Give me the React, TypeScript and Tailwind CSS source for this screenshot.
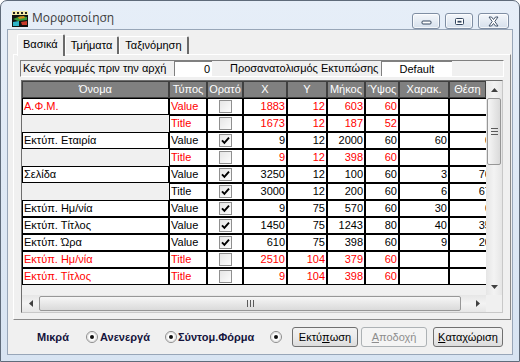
import React from 'react';

type Row = { name?: string; type: string; on: boolean; red: boolean; v: string[] };

const rows: Row[] = [
    { name: 'Α.Φ.Μ.', type: 'Value', on: false, red: true, v: ['1883', '12', '603', '60', '', ''] },
    { type: 'Title', on: false, red: true, v: ['1673', '12', '187', '52', '', ''] },
    { name: 'Εκτύπ. Εταιρία', type: 'Value', on: true, red: false, v: ['9', '12', '2000', '60', '60', '0'] },
    { type: 'Title', on: false, red: true, v: ['9', '12', '398', '60', '', ''] },
    { name: 'Σελίδα', type: 'Value', on: true, red: false, v: ['3250', '12', '100', '60', '3', '76'] },
    { type: 'Title', on: true, red: false, v: ['3000', '12', '200', '60', '6', '67'] },
    { name: 'Εκτύπ. Ημ/νία', type: 'Value', on: true, red: false, v: ['9', '75', '570', '60', '30', '0'] },
    { name: 'Εκτύπ. Τίτλος', type: 'Value', on: true, red: false, v: ['1450', '75', '1243', '80', '40', '35'] },
    { name: 'Εκτύπ. Ώρα', type: 'Value', on: true, red: false, v: ['610', '75', '398', '60', '9', '20'] },
    { name: 'Εκτύπ. Ημ/νία', type: 'Title', on: false, red: true, v: ['2510', '104', '379', '60', '', ''] },
    { name: 'Εκτύπ. Τίτλος', type: 'Title', on: false, red: true, v: ['9', '104', '398', '60', '', ''] },
];

const heads = [
    { t: 'Όνομα', w: 'w-[147px]' },
    { t: 'Τύπος', w: 'w-[38px]' },
    { t: 'Ορατό', w: 'w-[36px]' },
    { t: 'X', w: 'w-[44px]' },
    { t: 'Y', w: 'w-[40px]' },
    { t: 'Μήκος', w: 'w-[38px]' },
    { t: 'Ύψος', w: 'w-[34px]' },
    { t: 'Χαρακ.', w: 'w-[50px]' },
    { t: 'Θέση', w: 'w-[37px]' },
];

const numW = ['w-[44px]', 'w-[40px]', 'w-[38px]', 'w-[34px]', 'w-[50px]'];

const cell = 'h-full border border-black bg-white flex items-center overflow-hidden whitespace-nowrap';

function Check({ on }: { on: boolean }) {
    return (
        <div className="w-[13px] h-[13px] border border-[#8f8f8f] bg-gradient-to-br from-[#e6e6e6] to-[#fcfcfc] flex items-center justify-center">
            {on && (
                <svg width="9" height="9" viewBox="0 0 9 9">
                    <path d="M1 4.3 L3.4 6.8 L8 1.6" fill="none" stroke="#000" strokeWidth="1.9" />
                </svg>
            )}
        </div>
    );
}

function Radio() {
    return (
        <svg width="12" height="12" viewBox="0 0 12 12" className="shrink-0">
            <circle cx="6" cy="6" r="5.5" fill="#fff" stroke="#8a8a8a" />
            <circle cx="6" cy="6" r="4.3" fill="none" stroke="#dcdcdc" />
            <circle cx="6" cy="6" r="2" fill="#111" />
        </svg>
    );
}

function Arrow({ dir }: { dir: 'up' | 'down' | 'left' | 'right' }) {
    const d = {
        up: 'M0 4 L3.5 0 L7 4 Z',
        down: 'M0 0 L7 0 L3.5 4 Z',
        left: 'M4 0 L4 7 L0 3.5 Z',
        right: 'M0 0 L4 3.5 L0 7 Z',
    }[dir];
    const vert = dir === 'up' || dir === 'down';
    return (
        <svg width={vert ? 7 : 4} height={vert ? 4 : 7} viewBox={vert ? '0 0 7 4' : '0 0 4 7'}>
            <path d={d} fill="#404040" />
        </svg>
    );
}

function CaptionButton({ kind }: { kind: 'min' | 'max' | 'close' }) {
    return (
        <div
            className={`h-[16px] ${kind === 'close' ? 'w-[31px]' : 'w-[28px]'} rounded-[3px] border border-[#7f8ea3] bg-gradient-to-b from-[#f4f7fb] to-[#d6e0ec] flex items-center justify-center shadow-[inset_0_0_0_1px_rgba(255,255,255,0.7)]`}
        >
            {kind === 'min' && (
                <svg width="11" height="8" viewBox="0 0 11 8">
                    <rect x="1" y="4" width="9" height="3" rx="1" fill="#fff" stroke="#34465e" />
                </svg>
            )}
            {kind === 'max' && (
                <svg width="11" height="9" viewBox="0 0 11 9">
                    <rect x="1.5" y="1.5" width="8" height="6" rx="1" fill="#fff" stroke="#34465e" />
                    <rect x="3.5" y="3.8" width="4" height="1.8" fill="#34465e" />
                </svg>
            )}
            {kind === 'close' && (
                <svg width="13" height="11" viewBox="0 0 13 11">
                    <path d="M2 1 L4.5 1 L6.5 3.5 L8.5 1 L11 1 L7.8 5.5 L11 10 L8.5 10 L6.5 7.5 L4.5 10 L2 10 L5.2 5.5 Z" fill="#fff" stroke="#34465e" strokeWidth="0.9" strokeLinejoin="round" />
                </svg>
            )}
        </div>
    );
}

function AppIcon() {
    return (
        <svg width="16" height="16" viewBox="0 0 16 16" className="shrink-0">
            <rect x="0" y="0" width="16" height="4" fill="#f4e9a8" />
            <rect x="1" y="1" width="2" height="2" fill="#222" />
            <rect x="5" y="1" width="2" height="2" fill="#222" />
            <rect x="9" y="1" width="2" height="2" fill="#222" />
            <rect x="13" y="1" width="2" height="2" fill="#222" />
            <rect x="0" y="4" width="16" height="12" fill="#111" />
            <path d="M1 8 L9 5 L15 6 L15 9 L6 10 Z" fill="#3a9b3a" />
            <path d="M6 6 L12 5 L13 7 L7 8 Z" fill="#d98a1a" />
            <path d="M1 11 L7 10 L7 15 L1 15 Z" fill="#2fb4c8" />
            <path d="M9 11 L15 10 L15 14 L10 14 Z" fill="#c83a2a" />
        </svg>
    );
}

function Button({ children, disabled, w }: { children: React.ReactNode; disabled?: boolean; w: string }) {
    return (
        <div
            className={`${w} h-[20px] rounded-[3px] border flex items-center justify-center ${disabled
                ? 'border-[#adb2b5] bg-[#f4f4f4] text-[#8d8d8d]'
                : 'border-[#707070] bg-gradient-to-b from-[#f2f2f2] via-[#ebebeb] to-[#dcdcdc] text-black'
                }`}
        >
            {children}
        </div>
    );
}

function Tab({ label, active }: { label: string; active?: boolean }) {
    return (
        <div
            className={`px-[5px] flex items-center border-l border-t border-white border-r-2 border-r-[#6a6a6a] rounded-t-[2px] bg-[#f0f0f0] ${active ? 'h-[22px] relative z-10 -mb-[2px] pb-[2px]' : 'h-[18px] mt-[2px]'
                }`}
        >
            {label}
        </div>
    );
}

export default function App() {
    return (
        <div className="w-[520px] h-[362px] bg-white font-['Liberation_Sans',Arial,sans-serif] text-[11px] text-black leading-none">
            <div className="h-full rounded-t-[7px] border border-[#5f6b7a] bg-gradient-to-b from-[#e6eef8] to-[#d8e4f2] flex flex-col">
                {/* Title bar */}
                <div className="h-[28px] flex items-start pt-[10px] pl-[11px] pr-[10px]">
                    <AppIcon />
                    <span className="ml-[4px] mt-[1px] text-[12px] text-[#3c3c3c] font-['Open_Sans','Liberation_Sans',sans-serif]">Μορφοποίηση</span>
                    <div className="ml-auto flex gap-[5px] mt-[2px]">
                        <CaptionButton kind="min" />
                        <CaptionButton kind="max" />
                        <CaptionButton kind="close" />
                    </div>
                </div>

                {/* Client */}
                <div className="mx-[6px] flex-1 border border-[#98a6b8] bg-[#f0f0f0] flex flex-col">
                    <div className="flex pl-[9px] pt-[4px] items-end">
                        <Tab label="Βασικά" active />
                        <Tab label="Τμήματα" />
                        <Tab label="Ταξινόμηση" />
                    </div>

                    {/* Tab page */}
                    <div className="ml-[5px] mr-[1px] h-[266px] border-l border-t border-white border-r border-b border-r-[#8a8a8a] border-b-[#8a8a8a] pl-[6px] pt-[5px]">
                        <div className="w-[484px] h-[17px] border border-t-[#808080] border-l-[#808080] border-b-white border-r-white flex items-center">
                            <span className="w-[153px] pl-[2px] whitespace-nowrap">Κενές γραμμές πριν την αρχή</span>
                            <div className="w-[38px] h-full bg-white border-l border-t border-[#808080] flex items-center justify-end pr-[2px]">0</div>
                            <span className="w-[151px] ml-[18px] whitespace-nowrap">Προσανατολισμός Εκτυπώσης</span>
                            <div className="w-[71px] h-full bg-white border-l border-t border-[#808080] flex items-center justify-center">Default</div>
                        </div>

                        {/* Grid */}
                        <div className="mt-[3px] ml-[1px] w-[482px] h-[233px] border border-t-[#6e6e6e] border-l-[#6e6e6e] border-r-[#c8c8c8] border-b-[#c8c8c8] flex flex-col">
                            <div className="h-[214px] flex">
                                <div className="w-[464px] h-full overflow-hidden bg-[#f0f0f0]">
                                    <div className="flex h-[17px] bg-[#808080] text-white">
                                        {heads.map((h) => (
                                            <div key={h.t} className={`${h.w} h-full border border-[#404040] flex items-center justify-center overflow-hidden whitespace-nowrap`}>
                                                {h.t}
                                            </div>
                                        ))}
                                    </div>
                                    {rows.map((r, ri) => (
                                        <div key={ri} className={`flex h-[17px] ${r.red ? 'text-[#ff0000]' : 'text-black'}`}>
                                            {r.name ? (
                                                <div className={`w-[147px] ${cell} pl-px`}>{r.name}</div>
                                            ) : (
                                                <div className="w-[147px] h-full" />
                                            )}
                                            <div className={`w-[38px] ${cell} pl-px`}>{r.type}</div>
                                            <div className={`w-[36px] ${cell} justify-center`}>
                                                <Check on={r.on} />
                                            </div>
                                            {r.v.slice(0, 5).map((x, i) => (
                                                <div key={i} className={`${numW[i]} ${cell} justify-end pr-px`}>{x}</div>
                                            ))}
                                            <div className="w-[37px] h-full border-y border-l border-black bg-white overflow-hidden">
                                                <div className="w-[42px] h-full flex items-center justify-end pr-px">{r.v[5]}</div>
                                            </div>
                                        </div>
                                    ))}
                                </div>

                                {/* Vertical scrollbar */}
                                <div className="w-[16px] h-full flex flex-col bg-gradient-to-r from-[#e6e6e6] via-[#f3f3f3] to-[#e6e6e6]">
                                    <div className="h-[17px] flex items-center justify-center"><Arrow dir="up" /></div>
                                    <div className="flex-1 px-[1px]">
                                        <div className="h-[67px] rounded-[2px] border border-[#979797] bg-gradient-to-r from-[#f6f6f6] to-[#dadada] flex flex-col items-center justify-center gap-[2px]">
                                            <div className="w-[7px] h-px bg-[#5a5a5a]" />
                                            <div className="w-[7px] h-px bg-[#5a5a5a]" />
                                            <div className="w-[7px] h-px bg-[#5a5a5a]" />
                                        </div>
                                    </div>
                                    <div className="h-[17px] flex items-center justify-center"><Arrow dir="down" /></div>
                                </div>
                            </div>

                            {/* Horizontal scrollbar */}
                            <div className="h-[17px] flex">
                                <div className="w-[464px] h-full flex bg-gradient-to-b from-[#e6e6e6] via-[#f3f3f3] to-[#e6e6e6]">
                                    <div className="w-[17px] h-full flex items-center justify-center"><Arrow dir="left" /></div>
                                    <div className="flex-1 py-[1px]">
                                        <div className="w-[422px] h-full rounded-[2px] border border-[#979797] bg-gradient-to-b from-[#f6f6f6] to-[#dadada] flex items-center justify-center gap-[2px]">
                                            <div className="w-px h-[7px] bg-[#5a5a5a]" />
                                            <div className="w-px h-[7px] bg-[#5a5a5a]" />
                                            <div className="w-px h-[7px] bg-[#5a5a5a]" />
                                        </div>
                                    </div>
                                    <div className="w-[17px] h-full flex items-center justify-center"><Arrow dir="right" /></div>
                                </div>
                                <div className="w-[16px] h-full bg-[#f0f0f0]" />
                            </div>
                        </div>
                    </div>

                    {/* Bottom bar */}
                    <div className="flex-1 flex items-center pl-[29px] font-bold text-[#14143c]">
                        <span className="w-[49px]">Μικρά</span>
                        <Radio />
                        <span className="w-[65px] ml-[2px] whitespace-nowrap">Ανενεργά</span>
                        <Radio />
                        <span className="w-[92px] ml-[1px] whitespace-nowrap">Σύντομ.Φόρμα</span>
                        <Radio />
                        <div className="ml-[10px] flex font-normal">
                            <Button w="w-[66px]">Εκτύ<u>π</u>ωση</Button>
                            <div className="ml-[3px]">
                                <Button w="w-[66px]" disabled><u>Α</u>ποδοχή</Button>
                            </div>
                            <div className="ml-[6px]">
                                <Button w="w-[70px]"><u>Κ</u>αταχώριση</Button>
                            </div>
                        </div>
                    </div>
                </div>
                <div className="h-[6px]" />
            </div>
        </div>
    );
}
